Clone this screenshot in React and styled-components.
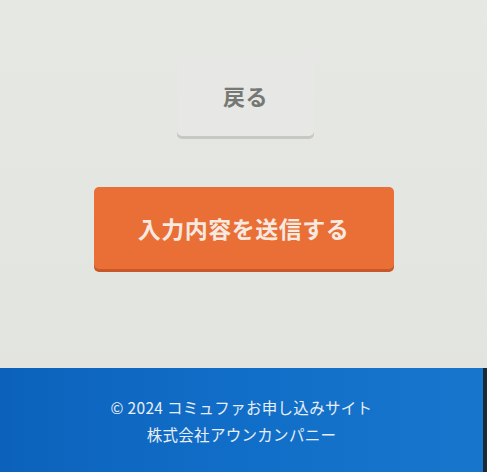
import styled, { createGlobalStyle } from "styled-components";

const GlobalStyle = createGlobalStyle`
  html, body {
    margin: 0;
    padding: 0;
    background: #e4e6e2;
  }
  body {
    font-family: "Noto Sans CJK JP", "Noto Sans", sans-serif;
  }
`;

const Page = styled.div`
  min-height: 472px;
  display: flex;
  flex-direction: column;
  background: linear-gradient(180deg, #e6e8e4 0%, #e3e5e1 60%, #e2e3df 100%);
`;

const Main = styled.main`
  flex: 1;
  display: flex;
  flex-direction: column;
  align-items: center;
  padding-top: 54px;
  gap: 51px;
`;

const Button = styled.button`
  display: flex;
  align-items: center;
  justify-content: center;
  width: ${(p) => p.$width}px;
  height: 82px;
  margin-left: ${(p) => p.$shift || 0}px;
  border: none;
  border-radius: 5px;
  font-family: inherit;
  font-size: ${(p) => (p.$primary ? 23 : 22)}px;
  font-weight: 700;
  letter-spacing: 0.5px;
  cursor: pointer;
  background: ${(p) => (p.$primary ? "#e96f37" : "#e7e8e5")};
  color: ${(p) => (p.$primary ? "#f6e9e0" : "#767874")};
  box-shadow: 0 3px 0 ${(p) => (p.$primary ? "#c8582a" : "#c6c8c2")};
`;

const Footer = styled.footer`
  height: 104px;
  box-sizing: border-box;
  padding-top: 26px;
  display: flex;
  flex-direction: column;
  align-items: center;
  background: linear-gradient(90deg, #0c62bb 0%, #116ec8 50%, #1776cc 100%);
  border-right: 4px solid #1b2a38;
  color: #e8eef5;
  font-size: 15.5px;
  letter-spacing: 0.3px;
  line-height: 27px;
`;

export default function App() {
  return (
    <>
      <GlobalStyle />
      <Page>
        <Main>
          <Button $width={137} $shift={4}>戻る</Button>
          <Button $width={300} $primary>
            入力内容を送信する
          </Button>
        </Main>
        <Footer>
          <span>© 2024 コミュファお申し込みサイト</span>
          <span>株式会社アウンカンパニー</span>
        </Footer>
      </Page>
    </>
  );
}
